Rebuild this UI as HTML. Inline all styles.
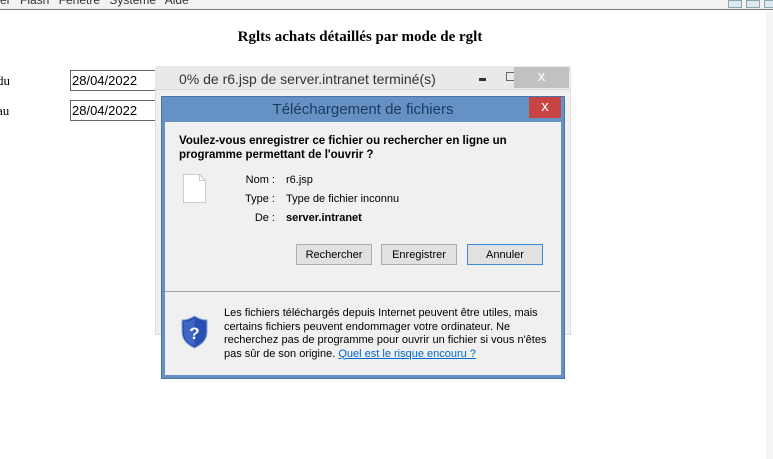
<!DOCTYPE html>
<html><head><meta charset="utf-8"><style>
*{margin:0;padding:0;box-sizing:border-box}
body{width:773px;height:459px;overflow:hidden;background:#fff;position:relative;font-family:"Liberation Sans",sans-serif}
.a{position:absolute}
.s{font-family:"Liberation Sans",sans-serif;font-size:11px;color:#000}
.btn{position:absolute;height:21px;border:1px solid #adadad;background:#e1e1e1;font-size:11px;text-align:center;line-height:20px}
</style></head><body>
<div class="a" style="left:0;top:0;width:773px;height:10px;background:#f2f2f2;border-bottom:1px solid #777"></div>
<div class="a s" style="left:0;top:-7px;font-size:12px;color:#333;word-spacing:6px">er Flash Fenêtre Système Aide</div>
<div class="a" style="left:728px;top:0;width:14px;height:8px;border:1px solid #8aa;background:#dde8f3"></div>
<div class="a" style="left:746px;top:0;width:14px;height:8px;border:1px solid #8aa;background:#dde8f3"></div>
<div class="a" style="left:764px;top:0;width:14px;height:8px;border:1px solid #8aa;background:#dde8f3"></div>
<div class="a" style="left:766px;top:11px;width:7px;height:448px;background:#f4f4f4"></div>
<div class="a" style="left:0;top:29px;width:720px;text-align:center;font-family:'Liberation Serif',serif;font-weight:bold;font-size:15px">Rglts achats détaillés par mode de rglt</div>
<div class="a" style="left:-3px;top:73px;font-family:'Liberation Serif',serif;font-size:13px">du</div>
<div class="a" style="left:-3px;top:103px;font-family:'Liberation Serif',serif;font-size:13px">au</div>
<div class="a" style="left:70px;top:70px;width:90px;height:21px;border:1px solid #666;border-right:none;font-size:13px;padding:2px 1px">28/04/2022</div>
<div class="a" style="left:70px;top:100px;width:90px;height:21px;border:1px solid #666;border-right:none;font-size:13px;padding:2px 1px">28/04/2022</div>
<!-- back window -->
<div class="a" style="left:155px;top:66px;width:416px;height:269px;background:#f0f0f0;border:1px solid #ddd"></div>
<div class="a" style="left:155px;top:66px;width:416px;height:24px;background:#e9e9e9;border-bottom:1px solid #d8d8d8"></div>
<div class="a" style="left:179px;top:71px;font-size:14px;color:#333">0% de r6.jsp de server.intranet terminé(s)</div>
<div class="a" style="left:479px;top:78px;width:7px;height:3px;background:#333"></div>
<div class="a" style="left:506px;top:72px;width:10px;height:9px;border:1px solid #666"></div>
<div class="a" style="left:514px;top:67px;width:55px;height:21px;background:#c1c1c1;color:#fff;text-align:center;font-size:15px;line-height:19px">x</div>
<!-- dialog -->
<div class="a" style="left:161px;top:96px;width:404px;height:283px;background:#6591c4;border:1px solid #4a74a6"></div>
<div class="a" style="left:161px;top:101px;width:404px;text-align:center;font-size:15px;color:#1d3a5e">Téléchargement de fichiers</div>
<div class="a" style="left:529px;top:97px;width:32px;height:21px;background:#c74444;color:#fff;text-align:center;font-size:15px;line-height:19px">x</div>
<div class="a" style="left:165px;top:122px;width:396px;height:253px;background:#f0f0f0"></div>
<div class="a s" style="left:179px;top:134px;font-weight:bold;line-height:14px;font-size:11.5px">Voulez-vous enregistrer ce fichier ou rechercher en ligne un<br>programme permettant de l'ouvrir ?</div>
<svg class="a" style="left:182px;top:173px" width="26" height="31"><path d="M1.5 1.5h16l6 6v22h-22z" fill="#fff" stroke="#ccc"/><path d="M17.5 1.5v6h6" fill="none" stroke="#ccc"/></svg>
<div class="a s" style="left:220px;top:171px;width:55px;text-align:right;line-height:19px">Nom :<br>Type :<br>De :</div>
<div class="a s" style="left:286px;top:171px;line-height:19px">r6.jsp<br>Type de fichier inconnu<br><b>server.intranet</b></div>
<div class="btn" style="left:296px;top:244px;width:76px">Rechercher</div>
<div class="btn" style="left:381px;top:244px;width:76px">Enregistrer</div>
<div class="btn" style="left:467px;top:244px;width:76px;border-color:#3c8ad8">Annuler</div>
<div class="a" style="left:165px;top:291px;width:395px;height:1px;background:#a0a0a0"></div>
<svg class="a" style="left:180px;top:315px" width="29" height="34"><path d="M14.5 1C10 4 6 5 2 5v12c0 8 6 13 12.5 16C21 30 27 25 27 17V5c-4 0-8-1-12.5-4z" fill="#2a4fb0" stroke="#8aa5d8"/><path d="M14.5 3v28C8 28 4 24 4 17V7c4 0 7-1 10.5-4z" fill="#4d76d4" opacity=".6"/><text x="14.5" y="24" font-size="17" font-weight="bold" fill="#fff" text-anchor="middle" font-family="Liberation Sans">?</text></svg>
<div class="a s" style="left:224px;top:307px;line-height:13.5px;width:330px">Les fichiers téléchargés depuis Internet peuvent être utiles, mais certains fichiers peuvent endommager votre ordinateur. Ne recherchez pas de programme pour ouvrir un fichier si vous n'êtes pas sûr de son origine. <span style="color:#0066cc;text-decoration:underline">Quel est le risque encouru ?</span></div>
</body></html>
